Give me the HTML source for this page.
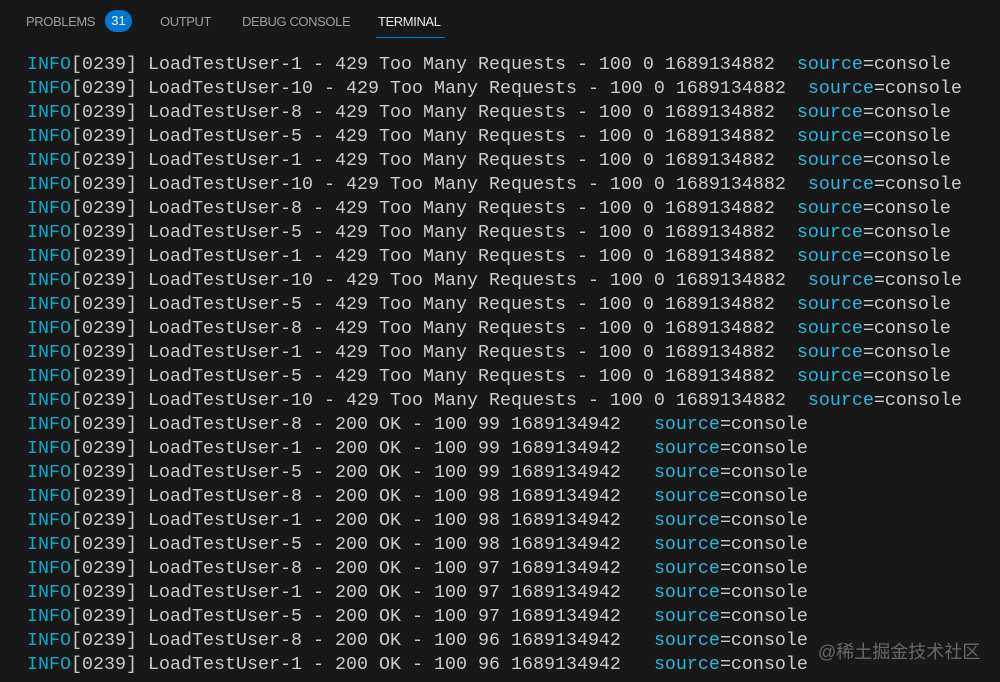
<!DOCTYPE html><html><head><style>
body{margin:0;width:1000px;height:682px;background:#181818;overflow:hidden;font-family:"Liberation Sans",sans-serif;position:relative}
.tab{position:absolute;top:14px;font-size:13px;color:#9d9d9d;letter-spacing:-0.4px}
.badge{position:absolute;left:105px;top:10px;width:27px;height:22px;border-radius:11px;background:#0078d4;color:#fff;font-size:13px;text-align:center;line-height:22px}
.ul{position:absolute;left:376px;top:37px;width:69px;height:1px;background:#0078d4}
pre{position:absolute;left:27px;top:53px;margin:0;font-family:"Liberation Mono",monospace;font-size:18.33px;line-height:24px;color:#cccccc}
.i{color:#11a8cd}.s{color:#29b8db}
.wm{position:absolute;left:818px;top:638px;font-family:"Liberation Sans","Noto Sans CJK SC",sans-serif;font-size:18px;color:rgba(200,200,200,0.45)}
</style></head><body>
<div class="tab" style="left:26px">PROBLEMS</div><div class="badge">31</div>
<div class="tab" style="left:160px">OUTPUT</div>
<div class="tab" style="left:242px">DEBUG CONSOLE</div>
<div class="tab" style="left:378px;color:#e7e7e7">TERMINAL</div>
<div class="ul"></div>
<pre><span class="i">INFO</span>[0239] LoadTestUser-1 - 429 Too Many Requests - 100 0 1689134882  <span class="s">source</span>=console
<span class="i">INFO</span>[0239] LoadTestUser-10 - 429 Too Many Requests - 100 0 1689134882  <span class="s">source</span>=console
<span class="i">INFO</span>[0239] LoadTestUser-8 - 429 Too Many Requests - 100 0 1689134882  <span class="s">source</span>=console
<span class="i">INFO</span>[0239] LoadTestUser-5 - 429 Too Many Requests - 100 0 1689134882  <span class="s">source</span>=console
<span class="i">INFO</span>[0239] LoadTestUser-1 - 429 Too Many Requests - 100 0 1689134882  <span class="s">source</span>=console
<span class="i">INFO</span>[0239] LoadTestUser-10 - 429 Too Many Requests - 100 0 1689134882  <span class="s">source</span>=console
<span class="i">INFO</span>[0239] LoadTestUser-8 - 429 Too Many Requests - 100 0 1689134882  <span class="s">source</span>=console
<span class="i">INFO</span>[0239] LoadTestUser-5 - 429 Too Many Requests - 100 0 1689134882  <span class="s">source</span>=console
<span class="i">INFO</span>[0239] LoadTestUser-1 - 429 Too Many Requests - 100 0 1689134882  <span class="s">source</span>=console
<span class="i">INFO</span>[0239] LoadTestUser-10 - 429 Too Many Requests - 100 0 1689134882  <span class="s">source</span>=console
<span class="i">INFO</span>[0239] LoadTestUser-5 - 429 Too Many Requests - 100 0 1689134882  <span class="s">source</span>=console
<span class="i">INFO</span>[0239] LoadTestUser-8 - 429 Too Many Requests - 100 0 1689134882  <span class="s">source</span>=console
<span class="i">INFO</span>[0239] LoadTestUser-1 - 429 Too Many Requests - 100 0 1689134882  <span class="s">source</span>=console
<span class="i">INFO</span>[0239] LoadTestUser-5 - 429 Too Many Requests - 100 0 1689134882  <span class="s">source</span>=console
<span class="i">INFO</span>[0239] LoadTestUser-10 - 429 Too Many Requests - 100 0 1689134882  <span class="s">source</span>=console
<span class="i">INFO</span>[0239] LoadTestUser-8 - 200 OK - 100 99 1689134942   <span class="s">source</span>=console
<span class="i">INFO</span>[0239] LoadTestUser-1 - 200 OK - 100 99 1689134942   <span class="s">source</span>=console
<span class="i">INFO</span>[0239] LoadTestUser-5 - 200 OK - 100 99 1689134942   <span class="s">source</span>=console
<span class="i">INFO</span>[0239] LoadTestUser-8 - 200 OK - 100 98 1689134942   <span class="s">source</span>=console
<span class="i">INFO</span>[0239] LoadTestUser-1 - 200 OK - 100 98 1689134942   <span class="s">source</span>=console
<span class="i">INFO</span>[0239] LoadTestUser-5 - 200 OK - 100 98 1689134942   <span class="s">source</span>=console
<span class="i">INFO</span>[0239] LoadTestUser-8 - 200 OK - 100 97 1689134942   <span class="s">source</span>=console
<span class="i">INFO</span>[0239] LoadTestUser-1 - 200 OK - 100 97 1689134942   <span class="s">source</span>=console
<span class="i">INFO</span>[0239] LoadTestUser-5 - 200 OK - 100 97 1689134942   <span class="s">source</span>=console
<span class="i">INFO</span>[0239] LoadTestUser-8 - 200 OK - 100 96 1689134942   <span class="s">source</span>=console
<span class="i">INFO</span>[0239] LoadTestUser-1 - 200 OK - 100 96 1689134942   <span class="s">source</span>=console</pre>
<div class="wm">@稀土掘金技术社区</div>
</body></html>
